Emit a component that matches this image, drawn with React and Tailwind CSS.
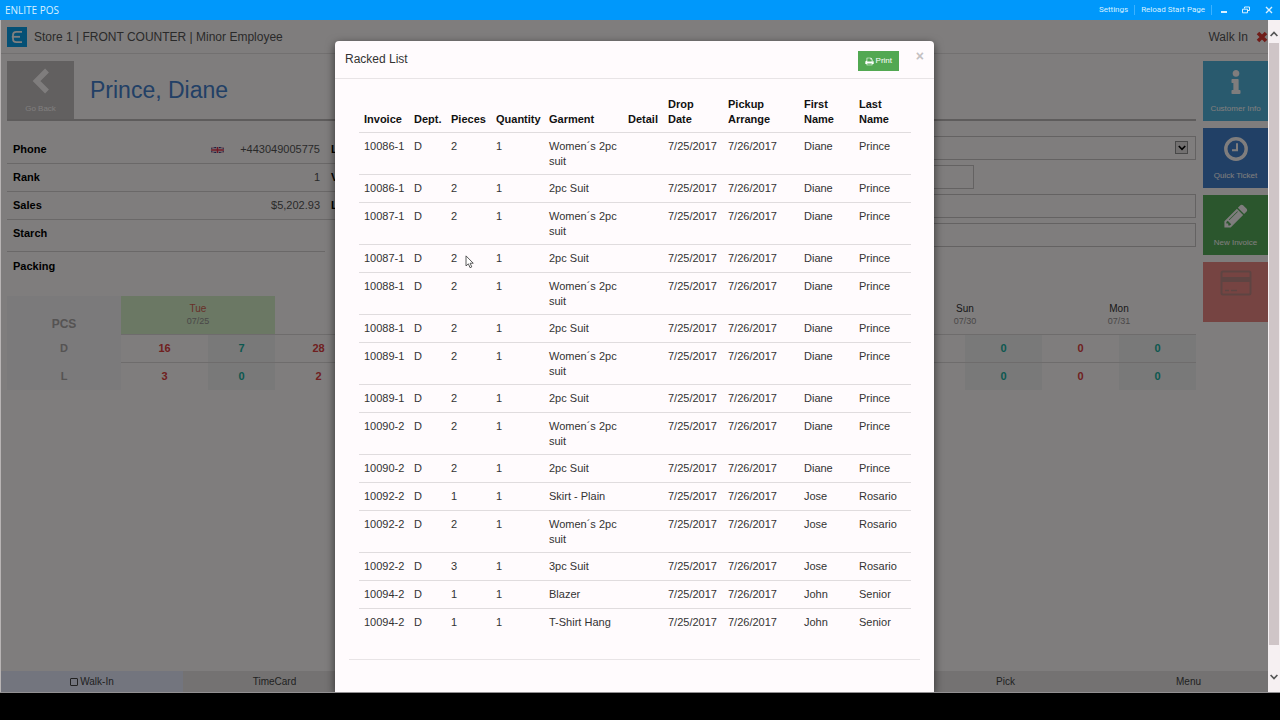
import React from "react";
import { FaInfo } from "react-icons/fa";

const garments = [
  ["10086-1", "2", "Women´s 2pc suit", "Diane", "Prince"],
  ["10086-1", "2", "2pc Suit", "Diane", "Prince"],
  ["10087-1", "2", "Women´s 2pc suit", "Diane", "Prince"],
  ["10087-1", "2", "2pc Suit", "Diane", "Prince"],
  ["10088-1", "2", "Women´s 2pc suit", "Diane", "Prince"],
  ["10088-1", "2", "2pc Suit", "Diane", "Prince"],
  ["10089-1", "2", "Women´s 2pc suit", "Diane", "Prince"],
  ["10089-1", "2", "2pc Suit", "Diane", "Prince"],
  ["10090-2", "2", "Women´s 2pc suit", "Diane", "Prince"],
  ["10090-2", "2", "2pc Suit", "Diane", "Prince"],
  ["10092-2", "1", "Skirt - Plain", "Jose", "Rosario"],
  ["10092-2", "2", "Women´s 2pc suit", "Jose", "Rosario"],
  ["10092-2", "3", "3pc Suit", "Jose", "Rosario"],
  ["10094-2", "1", "Blazer", "John", "Senior"],
  ["10094-2", "1", "T-Shirt Hang", "John", "Senior"],
];

const columns = [
  ["Invoice", "w-[50px]"],
  ["Dept.", "w-[37px]"],
  ["Pieces", "w-[45px]"],
  ["Quantity", "w-[53px]"],
  ["Garment", "w-[79px]"],
  ["Detail", "w-[40px]"],
  ["Drop Date", "w-[60px]"],
  ["Pickup Arrange", "w-[76px]"],
  ["First Name", "w-[55px]"],
  ["Last Name", "w-[57px]"],
];

const days = [
  { name: "Tue", date: "07/25", d: ["16", "7"], l: ["3", "0"], today: true },
  { name: "", date: "", d: ["28", ""], l: ["2", ""] },
  { name: "", date: "", d: ["", ""], l: ["", ""] },
  { name: "", date: "", d: ["", ""], l: ["", ""] },
  { name: "", date: "", d: ["", ""], l: ["", ""] },
  { name: "Sun", date: "07/30", d: ["", "0"], l: ["", "0"] },
  { name: "Mon", date: "07/31", d: ["0", "0"], l: ["0", "0"] },
];

const splits = [
  ["w-[87px]", "w-[67px]"],
  ["w-[87px]", "w-[67px]"],
  ["w-[77px]", "w-[77px]"],
  ["w-[77px]", "w-[76px]"],
  ["w-[76px]", "w-[76px]"],
  ["w-[77px]", "w-[77px]"],
  ["w-[77px]", "w-[77px]"],
];

const actions = [
  { label: "Customer Info", icon: <FaInfo className="size-6" />, bg: "bg-[#52b4dc]" },
  { label: "Quick Ticket", icon: <ClockIcon />, bg: "bg-[#4280cc]" },
  { label: "New Invoice", icon: <PencilIcon />, bg: "bg-[#56ac5a]" },
];

function ClockIcon() {
  return (
    <svg viewBox="0 0 24 24" className="size-6" fill="none" stroke="currentColor">
      <circle cx="12" cy="12" r="10.2" strokeWidth="3.4" />
      <path d="M13 6.2v7H8" strokeWidth="2" />
    </svg>
  );
}

function PencilIcon() {
  return (
    <svg viewBox="100 100 1600 1600" className="size-6" fill="currentColor">
      <path d="M491 1536l91-91-235-235-91 91v107h128v128h107zm523-928q0-22-22-22-10 0-17 7l-542 542q-7 7-7 17 0 22 22 22 10 0 17-7l542-542q7-7 7-17zm-54-192l416 416-832 832h-416v-416zm683 96q0 53-37 90l-166 166-416-416 166-165q36-38 90-38 53 0 91 38l235 234q37 39 37 91z" />
    </svg>
  );
}

function PrintIcon() {
  return (
    <svg viewBox="0 0 1792 1792" className="size-[9px]" fill="currentColor">
      <path d="M448 1536h896v-256h-896v256zm0-640h896v-384h-160q-40 0-68-28t-28-68v-160h-640v640zm1152 64q0-26-19-45t-45-19-45 19-19 45 19 45 45 19 45-19 19-45zm128 0v416q0 13-9.5 22.5t-22.5 9.5h-224v160q0 40-28 68t-68 28h-960q-40 0-68-28t-28-68v-160h-224q-13 0-22.5-9.5t-9.5-22.5v-416q0-79 56.5-135.5t135.5-56.5h64v-544q0-40 28-68t68-28h672q40 0 88 20t76 48l152 152q28 28 48 76t20 88v256h64q79 0 135.5 56.5t56.5 135.5z" />
    </svg>
  );
}

function BackIcon() {
  return (
    <svg viewBox="0 0 18 26" className="h-[26px] w-[18px]" fill="none" stroke="currentColor" strokeWidth="5.4">
      <path d="M15 2.5L4.5 13 15 23.5" />
    </svg>
  );
}

function CardIcon() {
  return (
    <svg viewBox="0 0 32 26" className="h-[26px] w-8" fill="none" stroke="currentColor">
      <rect x="1.5" y="1.5" width="29" height="23" rx="1.5" strokeWidth="2" />
      <path d="M2 9.5h28" strokeWidth="5" />
      <path d="M5 20.5h4M11 20.5h6" strokeWidth="1.5" />
    </svg>
  );
}

function Logo() {
  return (
    <svg viewBox="0 0 20 20" className="size-5" aria-hidden="true">
      <rect width="20" height="20" fill="#0aa0ea" />
      <path d="M15 4.8H9.4Q6 4.8 6 8v3.8Q6 15.2 9.4 15.2H15" fill="none" stroke="#fff" strokeWidth="1.8" />
      <path d="M4.8 9.8H13" stroke="#fff" strokeWidth="1.8" />
    </svg>
  );
}

function Flag() {
  return (
    <svg viewBox="0 0 26 12" preserveAspectRatio="none" className="h-[6px] w-[13px]" aria-hidden="true">
      <rect width="26" height="12" fill="#30438c" />
      <path d="M0 0l26 12M26 0L0 12" stroke="#fff" strokeWidth="3" />
      <path d="M0 0l26 12M26 0L0 12" stroke="#d0405a" strokeWidth="1" />
      <path d="M13 0v12M0 6h26" stroke="#fff" strokeWidth="5" />
      <path d="M13 0v12M0 6h26" stroke="#e0304a" strokeWidth="3" />
    </svg>
  );
}

function TitleBar() {
  return (
    <header className="flex h-5 shrink-0 items-center bg-[#0098fb] pl-[5px] pr-[7px] font-['Open_Sans',sans-serif] text-[#d8f0ff]">
      <h1 className="text-[10px]">ENLITE POS</h1>
      <div className="ml-auto flex items-center font-[Roboto,sans-serif] text-[8px]">
        <button className="border-r border-[#3cb2ff] pr-[6px] leading-[10px]">Settings</button>
        <button className="border-r border-[#3cb2ff] px-[6px] leading-[10px]">Reload Start Page</button>
        <button aria-label="Minimize" className="ml-[8px]">
          <svg viewBox="0 0 8 8" className="size-2"><path d="M1 6h6" stroke="currentColor" strokeWidth="2" /></svg>
        </button>
        <button aria-label="Restore" className="ml-[14px]">
          <svg viewBox="0 0 8 8" className="size-2" fill="none" stroke="currentColor">
            <path d="M2.5 2.5V1h5v3.5H6M.5 3.2h5v3.6h-5z" />
          </svg>
        </button>
        <button aria-label="Close" className="ml-[15px]">
          <svg viewBox="0 0 8 8" className="size-2" stroke="currentColor"><path d="M1 1l6 6M7 1L1 7" strokeWidth="1.4" /></svg>
        </button>
      </div>
    </header>
  );
}

function InfoRow({ label, children, last }) {
  return (
    <div className={last ? "flex h-7 items-center pl-[6px] pr-[5px]" : "flex h-7 items-center border-b border-[#d4d0d0] pl-[6px] pr-[5px]"}>
      <dt className="font-bold text-black">{label}</dt>
      <dd className="ml-auto flex items-center gap-4 text-[#555]">{children}</dd>
    </div>
  );
}

function Details() {
  return (
    <section className="flex pt-[15px] text-[11px]">
      <dl className="w-[318px] shrink-0">
        <InfoRow label="Phone"><Flag />+443049005775</InfoRow>
        <InfoRow label="Rank">1</InfoRow>
        <InfoRow label="Sales">$5,202.93</InfoRow>
        <div className="flex h-8 border-b border-[#d4d0d0] pl-[6px] pt-[5px]">
          <dt className="font-bold text-black">Starch</dt>
        </div>
        <InfoRow label="Packing" last />
      </dl>
      <dl className="w-[318px] shrink-0">
        <InfoRow label="L" />
        <InfoRow label="V" />
        <InfoRow label="L" />
      </dl>
      <form className="flex grow flex-col gap-[5px]">
        <div className="relative">
          <select aria-label="Location" className="block h-6 w-full appearance-none border border-[#c8c4c4] bg-transparent" />
          <span className="pointer-events-none absolute right-2 top-[5px] flex h-[13px] w-[13px] items-center justify-center border border-[#909090] bg-[#e4e0e0]">
            <svg viewBox="0 0 8 6" className="h-[6px] w-2" fill="none" stroke="#000" strokeWidth="1.6"><path d="M.8 1L4 4.4 7.2 1" /></svg>
          </span>
        </div>
        <input aria-label="Route" className="h-6 w-[331px] border border-[#c8c4c4]" />
        <input aria-label="Note" className="h-6 w-full border border-[#c8c4c4]" />
        <input aria-label="Comment" className="h-6 w-full border border-[#c8c4c4]" />
      </form>
    </section>
  );
}

function ScheduleRow({ label, field }) {
  return (
    <tr className="h-7">
      <th scope="row" className="bg-[#f7f5f7] font-bold text-[#aaa6a6]">{label}</th>
      {days.map((day, i) => (
        <React.Fragment key={i}>
          <td className="border-t border-[#dcd8d8] font-bold text-[#e04040]">{day[field][0]}</td>
          <td className="border-t border-[#dcd8d8] bg-[#f2f2f2] font-bold text-[#18b0a0]">{day[field][1]}</td>
        </React.Fragment>
      ))}
    </tr>
  );
}

function Schedule() {
  return (
    <table className="mt-4 w-full table-fixed border-collapse text-center text-[11px]">
      <colgroup>
        <col className="w-[114px]" />
        {splits.map(([a, b], i) => (
          <React.Fragment key={i}>
            <col className={a} />
            <col className={b} />
          </React.Fragment>
        ))}
      </colgroup>
      <thead>
        <tr className="h-[38px]">
          <th className="bg-[#f7f5f7] pt-[18px] text-[12px] font-bold text-[#aaa6a6]">PCS</th>
          {days.map((day, i) => (
            <th key={i} colSpan={2} className={day.today ? "bg-[#d6f0c8] font-normal leading-[13px] text-[#d06050]" : "font-normal leading-[13px] text-[#333]"}>
              <div className="text-[10px]">{day.name}</div>
              <div className="text-[9px] text-[#949090]">{day.date}</div>
            </th>
          ))}
        </tr>
      </thead>
      <tbody>
        <ScheduleRow label="D" field="d" />
        <ScheduleRow label="L" field="l" />
      </tbody>
    </table>
  );
}

function Sidebar() {
  return (
    <nav className="flex w-[65px] shrink-0 flex-col gap-[7px]">
      {actions.map((a) => (
        <button key={a.label} className={`flex h-[60px] flex-col items-center justify-between pb-[6px] pt-[9px] text-[8px] leading-[13px] text-[#fffbfb] ${a.bg}`}>
          {a.icon}
          <span className="whitespace-nowrap">{a.label}</span>
        </button>
      ))}
      <button disabled aria-label="Payment" className="flex h-[60px] flex-col items-center bg-[#ec8884] pt-2 text-[#bc8884]">
        <CardIcon />
      </button>
    </nav>
  );
}

function CustomerPage() {
  return (
    <div className="flex min-h-0 grow flex-col bg-[#fffbfb]">
      <div className="flex h-[34px] shrink-0 items-center border-b border-[#e4e0e0] pl-[6px] text-[12px] text-[#555]">
        <Logo />
        <span className="ml-[7px]">Store 1 | FRONT COUNTER | Minor Employee</span>
        <span className="ml-auto">Walk In</span>
        <svg viewBox="0 0 12 12" className="ml-2 size-3" stroke="#e03830" strokeWidth="3.6" aria-hidden="true">
          <path d="M2 2l8 8M10 2l-8 8" />
        </svg>
      </div>
      <div className="flex grow gap-[7px] pl-[6px] pt-[7px]">
        <main className="min-w-0 grow">
          <div className="flex h-[60px] items-stretch border-b-2 border-[#bcb8b8]">
            <button className="flex w-[67px] flex-col items-center justify-between bg-[#c4c0c0] pb-[4px] pt-[7px] text-[8px] leading-[13px] text-[#fffbfb]">
              <BackIcon />
              Go Back
            </button>
            <h2 className="ml-4 self-center text-[23px] leading-7 text-[#4480cc]">Prince, Diane</h2>
          </div>
          <Details />
          <Schedule />
        </main>
        <Sidebar />
      </div>
      <nav className="flex h-[21px] shrink-0 overflow-hidden bg-[#e8e4e4] text-[10px] text-[#444]">
        <button className="flex w-[182px] shrink-0 items-center justify-center gap-[2px] bg-[#e6eafc]">
          <span className="size-2 rounded-[1px] border border-[#444]" />
          Walk-In
        </button>
        <button className="w-[183px] shrink-0">TimeCard</button>
        <button className="ml-auto w-[183px] shrink-0">Pick</button>
        <button className="-mr-3 w-[183px] shrink-0">Menu</button>
      </nav>
    </div>
  );
}

function RackedList() {
  return (
    <div className="absolute inset-0 flex justify-center bg-black/50 pt-[21px]">
      <section role="dialog" aria-labelledby="racked-title" className="w-[599px] rounded-t-[4px] bg-[#fffbfd] shadow-[0_3px_10px_rgba(0,0,0,0.6)]">
        <div className="flex h-[38px] items-start border-b border-[#e8e4e6] pl-[10px] pr-[10px] pt-[10px]">
          <h2 id="racked-title" className="text-[12px] leading-4 text-[#333]">Racked List</h2>
          <button className="ml-auto flex h-5 w-[41px] items-center justify-center gap-[2px] bg-[#52a852] text-[8px] text-white">
            <PrintIcon />
            Print
          </button>
          <button aria-label="Close" className="ml-[17px] text-[14px] font-bold leading-[10px] text-[#c4c0c2]">×</button>
        </div>
        <div className="px-[24px] pt-4">
          <table className="w-full table-fixed border-separate border-spacing-0 text-left align-top text-[11px] leading-[15px] text-[#333]">
            <colgroup>
              {columns.map(([name, width]) => (
                <col key={name} className={width} />
              ))}
            </colgroup>
            <thead>
              <tr>
                {columns.map(([name]) => (
                  <th key={name} scope="col" className="border-b border-[#e0dcde] pb-[5px] pl-[5px] pr-[5px] pt-[2px] align-bottom font-bold text-[#111]">{name}</th>
                ))}
              </tr>
            </thead>
            <tbody>
              {garments.map(([invoice, pieces, garment, first, last], i) => (
                <tr key={i} className="group">
                  {[invoice, "D", pieces, "1", garment, "", "7/25/2017", "7/26/2017", first, last].map((value, j) => (
                    <td key={j} className="h-7 border-b border-[#e0dcde] pb-[5px] pl-[5px] pt-[6px] align-top group-last:border-b-0">{value}</td>
                  ))}
                </tr>
              ))}
            </tbody>
          </table>
        </div>
        <hr className="mx-[14px] mt-[22px] border-[#e8e4e6]" />
      </section>
      <svg viewBox="0 0 10 16" className="absolute left-[464px] top-[235px] h-[14px] w-[9px]" aria-hidden="true">
        <path d="M1 1v11.5l2.7-2.4 1.9 4.4 2-.9-1.9-4.2h3.6z" fill="#fff" stroke="#444" />
      </svg>
    </div>
  );
}

function ScrollBar() {
  return (
    <div className="flex w-3 shrink-0 flex-col items-center bg-[#f6f0f2]" aria-hidden="true">
      <div className="flex h-[23px] items-center pt-[5px]">
        <svg viewBox="0 0 8 6" className="h-[6px] w-2" fill="none" stroke="#555" strokeWidth="1.7"><path d="M.6 5L4 1.4 7.4 5" /></svg>
      </div>
      <div className="mb-[29px] w-[10px] grow bg-[#cfc5c7]" />
      <svg viewBox="0 0 8 6" className="mb-3 h-[6px] w-2 shrink-0" fill="none" stroke="#555" strokeWidth="1.7"><path d="M.6 1L4 4.6 7.4 1" /></svg>
    </div>
  );
}

export default function App() {
  return (
    <div className="flex h-screen flex-col overflow-hidden bg-black font-['Liberation_Sans',Arial,sans-serif]">
      <TitleBar />
      <div className="flex min-h-0 grow border-b border-[#929092]">
        <div className="relative flex min-w-0 grow flex-col overflow-hidden border-l border-[#b8b4b4]">
          <CustomerPage />
          <RackedList />
        </div>
        <ScrollBar />
      </div>
      <div className="h-[27px] shrink-0 bg-black" />
    </div>
  );
}
